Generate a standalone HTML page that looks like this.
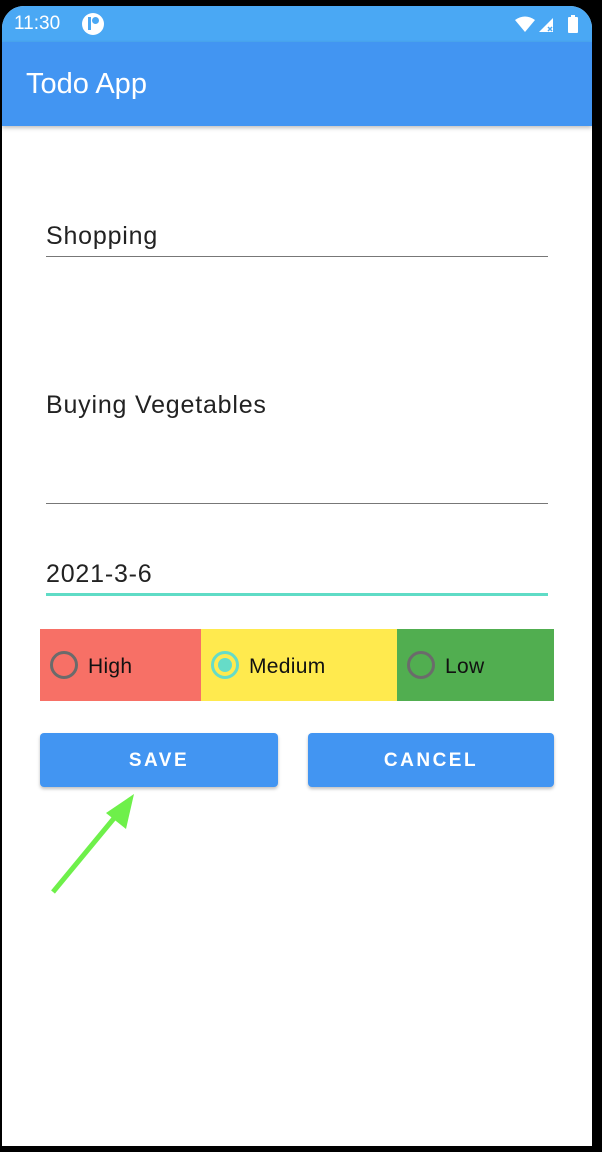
<!DOCTYPE html>
<html><head><meta charset="utf-8"><style>
*{margin:0;padding:0;box-sizing:border-box}
html,body{width:602px;height:1152px;background:#000;overflow:hidden;font-family:"Liberation Sans",sans-serif}
.phone{position:absolute;left:2px;top:6px;width:590px;height:1140px;background:#fff;border-radius:22px 22px 0 0;overflow:hidden}
.status{position:absolute;left:0;top:0;width:590px;height:36px;background:#4aa8f4;color:#fff;font-size:19px}
.appbar{position:absolute;left:0;top:36px;width:590px;height:84px;background:#4295f2;box-shadow:0 2px 4px rgba(0,0,0,.25)}
.appbar span{position:absolute;left:24px;top:26px;color:#fff;font-size:29px}
.txt{position:absolute;left:44px;font-size:25px;color:#222;letter-spacing:0.8px}
.line{position:absolute;left:44px;width:502px;height:1px;background:#777}
.row{position:absolute;left:38px;top:623px;height:72px;width:514px;display:flex}
.row>div{height:72px;position:relative;font-size:21px;color:#111}
.rad{position:absolute;left:10px;top:22px;width:28px;height:28px;border-radius:50%;border:3px solid #6b6b6b}
.lbl{position:absolute;left:48px;top:26px;letter-spacing:0.3px}
.btn{position:absolute;top:727px;height:54px;background:#4295f2;border-radius:4px;color:#fff;font-size:19px;font-weight:bold;letter-spacing:2.5px;text-align:center;line-height:56px;box-shadow:0 2px 3px rgba(0,0,0,.25)}
</style></head><body>
<div class="phone">
 <div class="status">
  <span style="position:absolute;left:12px;top:7px">11:30</span>
  <div style="position:absolute;left:80px;top:7px;width:22px;height:22px;border-radius:50%;background:#fff"><div style="position:absolute;left:6px;top:4px;width:3px;height:13px;background:#4aa8f4"></div><div style="position:absolute;left:10px;top:4px;width:7px;height:7px;border-radius:50%;background:#4aa8f4"></div></div>
  <svg style="position:absolute;left:510px;top:8px" width="80" height="22" viewBox="0 0 80 22">
   <path d="M3 6 Q13 -1 23 6 L13 18 Z" fill="#fff"/>
   <path d="M27 18 L41 4 L41 18 Z" fill="#fff"/>
   <path d="M36 13 L40 17 M40 13 L36 17" stroke="#4aa8f4" stroke-width="1.5"/>
   <rect x="56" y="3" width="10" height="16" rx="1" fill="#fff"/><rect x="59" y="1" width="4" height="3" fill="#fff"/>
  </svg>
 </div>
 <div class="appbar"><span>Todo App</span></div>
 <div class="txt" style="top:216px">Shopping</div>
 <div class="line" style="top:250px"></div>
 <div class="txt" style="top:385px">Buying Vegetables</div>
 <div class="line" style="top:497px"></div>
 <div class="txt" style="top:554px">2021-3-6</div>
 <div class="line" style="top:587px;height:3px;background:#5fdcc6"></div>
 <div class="row">
  <div style="width:161px;background:#f77066"><div class="rad"></div><div class="lbl">High</div></div>
  <div style="width:196px;background:#ffea4e"><div class="rad" style="border-color:#66dcc8"><div style="position:absolute;left:4px;top:4px;width:14px;height:14px;border-radius:50%;background:#66dcc8"></div></div><div class="lbl">Medium</div></div>
  <div style="width:157px;background:#51ae50"><div class="rad"></div><div class="lbl">Low</div></div>
 </div>
 <div class="btn" style="left:38px;width:238px">SAVE</div>
 <div class="btn" style="left:306px;width:246px">CANCEL</div>
 <svg style="position:absolute;left:0;top:0" width="590" height="1140">
  <line x1="51" y1="886" x2="118" y2="805" stroke="#6ef04a" stroke-width="5"/>
  <path d="M132 788 L104 807 L124 823 Z" fill="#6ef04a"/>
 </svg>
</div>
</body></html>
